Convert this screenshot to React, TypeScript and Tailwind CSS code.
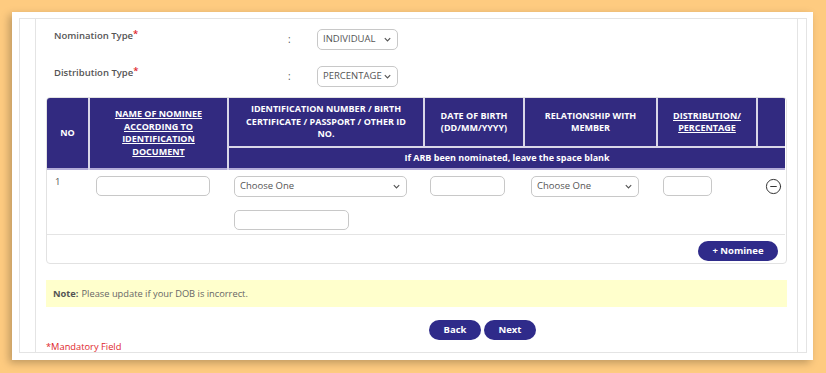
import React from 'react';
import { CircleMinus } from 'lucide-react';

const Chevron = () => (
  <svg width="9" height="9" viewBox="0 0 10 10" className="shrink-0">
    <path d="M2 3.5 L5 6.5 L8 3.5" fill="none" stroke="#555" strokeWidth="1.3" />
  </svg>
);

const FakeSelect = ({ label, className }: { label: string; className: string }) => (
  <div className={`flex items-center justify-between border border-[#c8c8c8] rounded-[5px] bg-white px-[5px] text-[#555] ${className}`}>
    <span>{label}</span>
    <Chevron />
  </div>
);

const Input = ({ className }: { className: string }) => (
  <div className={`border border-[#c8c8c8] rounded-[5px] bg-white h-[20px] ${className}`} />
);

const App = () => {
  return (
    <div className="w-[826px] h-[373px] bg-[#fecb80] pt-[12px] pl-[12px] font-['Open_Sans',sans-serif]">
      <div className="w-[801px] h-[348px] bg-white pt-[6px] pl-[7px] shadow-[-3px_3px_8px_rgba(0,0,0,0.25)]">
        <div className="w-[788px] h-[335px] border border-[#e4e4e4] flex">
          <div className="w-[16px] border-r border-[#e4e4e4]" />
          <div className="w-[761px] px-[10px] overflow-hidden">
            <div className="flex items-center h-[22px] mt-[9px] pl-[8px]">
              <span className="w-[234px] text-[9.5px] font-semibold text-[#555] -mt-[6px]">
                Nomination Type<span className="text-[#e0262b] relative -top-[2px]">*</span>
              </span>
              <span className="w-[29px] text-[10px] text-[#555]">:</span>
              <FakeSelect label="INDIVIDUAL" className="w-[81px] h-[21px] text-[9.5px]" />
            </div>
            <div className="flex items-center h-[21px] mt-[16px] pl-[8px]">
              <span className="w-[234px] text-[9.5px] font-semibold text-[#555] -mt-[6px]">
                Distribution Type<span className="text-[#e0262b] relative -top-[2px]">*</span>
              </span>
              <span className="w-[29px] text-[10px] text-[#555]">:</span>
              <FakeSelect label="PERCENTAGE" className="w-[81px] h-[21px] text-[9.5px]" />
            </div>

            <div className="mt-[10px] border border-[#e2e2e2] rounded-[4px] overflow-hidden">
              <table className="w-[738px] border-collapse text-[9px] leading-[12.5px]">
                <thead>
                  <tr className="bg-[#322a80] text-white font-bold">
                    <th rowSpan={2} className="w-[42px] border-r-2 border-[#d9d7e8] align-middle">NO</th>
                    <th rowSpan={2} className="w-[139px] border-r-2 border-[#d9d7e8] px-[8px] align-middle">
                      <span className="underline">NAME OF NOMINEE ACCORDING TO IDENTIFICATION DOCUMENT</span>
                    </th>
                    <th className="w-[196px] h-[49px] border-r-2 border-b-2 border-[#d9d7e8] px-[12px]">
                      IDENTIFICATION NUMBER / BIRTH CERTIFICATE / PASSPORT / OTHER ID NO.
                    </th>
                    <th className="w-[100px] border-r-2 border-b-2 border-[#d9d7e8] px-[10px]">DATE OF BIRTH (DD/MM/YYYY)</th>
                    <th className="w-[133px] border-r-2 border-b-2 border-[#d9d7e8] px-[14px]">RELATIONSHIP WITH MEMBER</th>
                    <th className="w-[100px] border-r-2 border-b-2 border-[#d9d7e8] px-[10px]">
                      <span className="underline">DISTRIBUTION/ PERCENTAGE</span>
                    </th>
                    <th className="border-b-2 border-[#d9d7e8]" />
                  </tr>
                  <tr className="bg-[#322a80] text-white font-bold">
                    <th colSpan={5} className="h-[22px]">If ARB been nominated, leave the space blank</th>
                  </tr>
                </thead>
                <tbody>
                  <tr className="border-t-2 border-[#b3acd8] border-b border-b-[#e4e4e4] align-top">
                    <td className="pl-[8px] pt-[6px] text-[9.5px] text-[#555555]">1</td>
                    <td className="pl-[7px] pt-[6px]">
                      <Input className="w-[114px]" />
                    </td>
                    <td className="pl-[6px] pt-[6px] pb-[4px]">
                      <FakeSelect label="Choose One" className="w-[173px] h-[21px] text-[9.5px]" />
                      <Input className="w-[115px] mt-[13px]" />
                    </td>
                    <td className="pl-[6px] pt-[6px]">
                      <Input className="w-[75px]" />
                    </td>
                    <td className="pl-[7px] pt-[6px]">
                      <FakeSelect label="Choose One" className="w-[108px] h-[21px] text-[9.5px]" />
                    </td>
                    <td className="pl-[6px] pt-[6px]">
                      <Input className="w-[49px]" />
                    </td>
                    <td className="pt-[8px] pl-[8px]">
                      <CircleMinus size={17} strokeWidth={1.4} color="#333" />
                    </td>
                  </tr>
                  <tr>
                    <td colSpan={7} className="pt-[6px] pb-[2px] pr-[7px]">
                      <div className="flex justify-end">
                        <button className="w-[80px] h-[20px] rounded-full bg-[#2f2b8a] text-white text-[9.5px] font-bold">
                          + Nominee
                        </button>
                      </div>
                    </td>
                  </tr>
                </tbody>
              </table>
            </div>

            <div className="mt-[16px] h-[27px] bg-[#ffffcc] flex items-center px-[7px] text-[9.3px] text-[#666]">
              <span className="font-bold text-[#555] mr-[3px]">Note:</span>Please update if your DOB is incorrect.
            </div>

            <div className="flex gap-[3px] mt-[13px] ml-[383px]">
              <button className="w-[52px] h-[20px] rounded-full bg-[#2f2b8a] text-white text-[9.5px] font-bold">Back</button>
              <button className="w-[52px] h-[20px] rounded-full bg-[#2f2b8a] text-white text-[9.5px] font-bold">Next</button>
            </div>

            <div className="mt-[2px] text-[9.3px] leading-[10px] text-[#e0262b]">*Mandatory Field</div>
          </div>
          <div className="flex-1 border-l border-[#e4e4e4]" />
        </div>
      </div>
    </div>
  );
};

export default App;
